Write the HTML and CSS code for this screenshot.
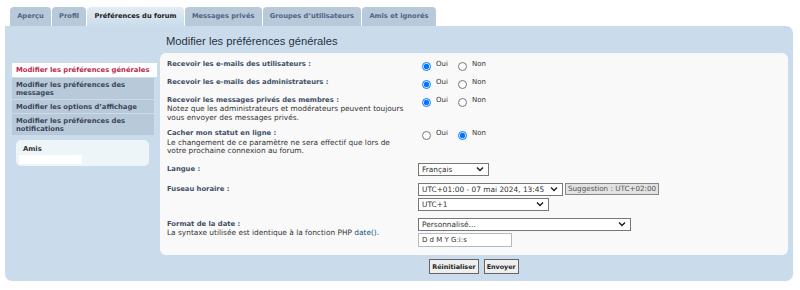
FILE: index.html
```html
<!DOCTYPE html>
<html lang="fr">
<head>
    <meta charset="UTF-8">
    <title>Panneau de l'utilisateur - Préférences du forum</title>
    <link rel="stylesheet" href="styles.css">
</head>
<body>
    <ul class="tabs">
        <li class="tab"><a href="#">Aperçu</a></li>
        <li class="tab"><a href="#">Profil</a></li>
        <li class="tab active"><a href="#">Préférences du forum</a></li>
        <li class="tab"><a href="#">Messages privés</a></li>
        <li class="tab"><a href="#">Groupes d’utilisateurs</a></li>
        <li class="tab"><a href="#">Amis et ignorés</a></li>
    </ul>

    <div class="panel">
        <div class="side">
            <ul class="menu">
                <li class="active"><a href="#">Modifier les préférences générales</a></li>
                <li><a href="#">Modifier les préférences des messages</a></li>
                <li><a href="#">Modifier les options d’affichage</a></li>
                <li><a href="#">Modifier les préférences des notifications</a></li>
            </ul>
            <div class="friends">
                <h3>Amis</h3>
                <div class="friends-list"></div>
            </div>
        </div>

        <div class="main">
            <h2>Modifier les préférences générales</h2>
            <div class="box">
                <div class="row">
                    <div class="label"><b>Recevoir les e-mails des utilisateurs :</b></div>
                    <div class="field">
                        <label class="choice"><input type="radio" name="massemail" checked> Oui</label>
                        <label class="choice"><input type="radio" name="massemail"> Non</label>
                    </div>
                </div>
                <div class="row">
                    <div class="label"><b>Recevoir les e-mails des administrateurs :</b></div>
                    <div class="field">
                        <label class="choice"><input type="radio" name="adminemail" checked> Oui</label>
                        <label class="choice"><input type="radio" name="adminemail"> Non</label>
                    </div>
                </div>
                <div class="row">
                    <div class="label">
                        <b>Recevoir les messages privés des membres :</b>
                        <span>Notez que les administrateurs et modérateurs peuvent toujours vous envoyer des messages privés.</span>
                    </div>
                    <div class="field">
                        <label class="choice"><input type="radio" name="allowpm" checked> Oui</label>
                        <label class="choice"><input type="radio" name="allowpm"> Non</label>
                    </div>
                </div>
                <div class="row">
                    <div class="label">
                        <b>Cacher mon statut en ligne :</b>
                        <span>Le changement de ce paramètre ne sera effectif que lors de votre prochaine connexion au forum.</span>
                    </div>
                    <div class="field">
                        <label class="choice"><input type="radio" name="hideonline"> Oui</label>
                        <label class="choice"><input type="radio" name="hideonline" checked> Non</label>
                    </div>
                </div>
                <div class="row with-select">
                    <div class="label"><b>Langue :</b></div>
                    <div class="field">
                        <select class="lang"><option>Français</option></select>
                    </div>
                </div>
                <div class="row with-select">
                    <div class="label"><b>Fuseau horaire :</b></div>
                    <div class="field stack">
                        <div class="line">
                            <select class="tz-date"><option>UTC+01:00 - 07 mai 2024, 13:45</option></select>
                            <button class="suggest">Suggestion : UTC+02:00</button>
                        </div>
                        <select class="tz"><option>UTC+1</option></select>
                    </div>
                </div>
                <div class="row with-select">
                    <div class="label">
                        <b>Format de la date :</b>
                        <span>La syntaxe utilisée est identique à la fonction PHP <a href="#">date()</a>.</span>
                    </div>
                    <div class="field stack">
                        <select class="dateformat"><option>Personnalisé…</option></select>
                        <input type="text" class="datecustom" value="D d M Y G:i:s">
                    </div>
                </div>
            </div>
            <div class="actions">
                <button class="btn">Réinitialiser</button>
                <button class="btn">Envoyer</button>
            </div>
        </div>
    </div>
</body>
</html>
```

FILE: styles.css
```css
:root {
    --panel: #cadceb;
    --tab: #b8c9da;
    --box: #f9f9f9;
    --label: #425067;
    --text: #333333;
    --red: #bc2a4d;
}

* {
    margin: 0;
    padding: 0;
    box-sizing: border-box;
}

body {
    font-family: "DejaVu Sans", Verdana, sans-serif;
    font-size: 7.4px;
    color: var(--text);
    background-color: #ffffff;
}

a {
    text-decoration: none;
}

/* tabs */
.tabs {
    list-style: none;
    display: flex;
    gap: 1px;
    padding: 7px 0 0 10px;
}

.tab a {
    display: block;
    height: 19px;
    line-height: 19px;
    padding: 0 7.2px;
    background-color: var(--tab);
    border-radius: 4px 4px 0 0;
    color: #536482;
    font-weight: bold;
    font-size: 6.7px;
}

.tab.active a {
    background: linear-gradient(#e2ecf4, var(--panel));
    color: #222;
}

/* panel */
.panel {
    display: flex;
    gap: 6px;
    margin: 0 7px 0 5px;
    padding: 0 5px 7px 7px;
    background-color: var(--panel);
    border-radius: 0 7px 7px 7px;
}

.side {
    width: 142px;
    flex-shrink: 0;
    padding-top: 37px;
}

.menu {
    list-style: none;
}

.menu li {
    margin-bottom: 1px;
}

.menu a {
    display: block;
    padding: 3px 4px 2px 4px;
    line-height: 8px;
    font-size: 6.8px;
    background-color: var(--tab);
    color: #3c4656;
    font-weight: bold;
}

.menu li.active a {
    background-color: #ffffff;
    color: var(--red);
    margin-right: -3px;
    padding-top: 3px;
    padding-bottom: 3px;
}

.friends {
    margin: 5px 5px 0 4px;
    padding: 5px 3px 2px 3px;
    background-color: #eef5f9;
    border-radius: 5px;
    height: 26px;
}

.friends h3 {
    font-size: 6.8px;
    line-height: 8px;
    padding-left: 4px;
    color: var(--text);
}

.friends-list {
    width: 63px;
    height: 9px;
    margin-top: 2px;
    background-color: #ffffff;
}

.main {
    flex: 1;
}

.main h2 {
    font-family: "Liberation Sans", Arial, sans-serif;
    font-weight: normal;
    font-size: 11.2px;
    line-height: 17px;
    color: #28313f;
    padding: 7px 0 3px 6px;
}

.box {
    background-color: var(--box);
    border-radius: 6px;
    padding: 3px 7px 5px 7px;
}

.row {
    display: flex;
    padding: 3.5px 0;
}

.label {
    width: 251px;
    flex-shrink: 0;
    line-height: 8.5px;
    padding-right: 9px;
}

.with-select .label {
    padding-top: 2px;
}

.label b {
    display: block;
    font-size: 6.8px;
    line-height: 9.5px;
    color: var(--label);
}

.label span {
    display: block;
}

.label a {
    color: #105289;
}

.field {
    display: flex;
    align-items: flex-start;
    gap: 6px;
}

.field.stack {
    flex-direction: column;
    gap: 2px;
}

.line {
    display: flex;
    gap: 2px;
}

.choice {
    display: flex;
    align-items: flex-start;
    gap: 5px;
    line-height: 9px;
    padding-left: 4px;
    font-size: 7px;
}

.choice input {
    width: 9px;
    height: 9px;
    margin: 2px 0 0 0;
}

select {
    appearance: none;
    font-family: "DejaVu Sans", Verdana, sans-serif;
    font-size: 7.4px;
    color: #333;
    height: 13px;
    padding: 0 12px 0 3px;
    border: 1px solid #777;
    border-radius: 0;
    background: #fff url("data:image/svg+xml,%3Csvg xmlns='http://www.w3.org/2000/svg' width='8' height='6' viewBox='0 0 8 6'%3E%3Cpath d='M1 1.5l3 3 3-3' fill='none' stroke='%23222' stroke-width='1.5'/%3E%3C/svg%3E") no-repeat right 4px center;
}

.lang { width: 71px; }
.tz-date { width: 145px; }
.tz { width: 131px; }
.dateformat { width: 213px; }

.suggest {
    height: 12px;
    padding: 0 2px;
    font-family: "DejaVu Sans", Verdana, sans-serif;
    font-size: 7.2px;
    color: #555;
    background-color: #e2e2e2;
    border: 1px solid #888;
}

.datecustom {
    width: 94px;
    height: 14px;
    padding: 0 3px;
    font-family: "DejaVu Sans", Verdana, sans-serif;
    font-size: 7px;
    color: #333;
    border: 1px solid #b4bac0;
    background-color: #fff;
}

.actions {
    display: flex;
    justify-content: center;
    gap: 5px;
    padding-top: 4px;
}

.btn {
    height: 15px;
    padding: 0 2px;
    font-family: "DejaVu Sans", Verdana, sans-serif;
    font-size: 6.4px;
    font-weight: bold;
    color: #222;
    background-color: #efefef;
    border: 1px solid #666;
}
```
